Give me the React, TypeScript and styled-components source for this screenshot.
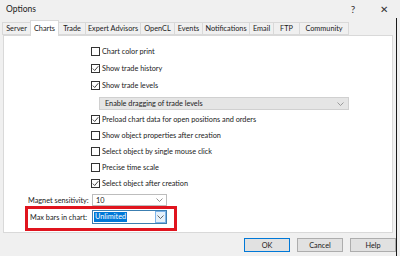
import React from "react";
import styled, { createGlobalStyle } from "styled-components";

const Global = createGlobalStyle`
  html, body { margin: 0; padding: 0; background: #f0f0f0; }
  body { width: 400px; height: 256px; overflow: hidden; font-family: Lato, "Noto Sans", sans-serif; font-size: 7.3px; color: #1a1a1a; }
`;

const Window = styled.div`
  width: 400px;
  height: 256px;
  display: flex;
  flex-direction: column;
  background: #f0f0f0;
`;

const TitleBar = styled.div`
  height: 18px;
  display: flex;
  align-items: center;
  padding-left: 6px;
  background: #f0f0f0;
  font-size: 8.5px;
  color: #222;
`;

const TitleText = styled.div`
  flex: 1;
`;

const TitleButton = styled.div<{ $w: number }>`
  width: ${(p) => p.$w}px;
  text-align: center;
  font-size: 10px;
  color: #333;
`;

const Body = styled.div`
  flex: 1;
  display: flex;
  flex-direction: column;
  border-right: 1px solid #1a1a1a;
  margin-right: 3px;
`;

const Tabs = styled.div`
  display: flex;
  align-items: flex-end;
  padding-left: 3px;
  height: 17px;
`;

const Tab = styled.div<{ $w: number; $active?: boolean }>`
  width: ${(p) => p.$w}px;
  height: ${(p) => (p.$active ? 16 : 13)}px;
  box-sizing: border-box;
  border: 1px solid #d9d9d9;
  border-bottom: ${(p) => (p.$active ? "none" : "1px solid #d9d9d9")};
  margin-left: -1px;
  background: ${(p) => (p.$active ? "#fff" : "#f0f0f0")};
  display: flex;
  align-items: center;
  justify-content: center;
  position: relative;
  z-index: ${(p) => (p.$active ? 1 : 0)};
  margin-bottom: ${(p) => (p.$active ? "-1px" : "0")};
  white-space: nowrap;
`;

const Panel = styled.div`
  margin-left: 3px;
  width: 390px;
  height: 198px;
  box-sizing: border-box;
  background: #fff;
  border: 1px solid #d9d9d9;
  display: flex;
  flex-direction: column;
`;

const Row = styled.div<{ $top: number }>`
  display: flex;
  align-items: center;
  height: 14px;
  margin-top: ${(p) => p.$top}px;
  padding-left: 87px;
  white-space: nowrap;
`;

const Box = styled.div`
  width: 9px;
  height: 9px;
  box-sizing: border-box;
  border: 1px solid #333;
  margin-right: 2px;
  display: flex;
  align-items: center;
  justify-content: center;
  background: #fff;
`;

const Check = () => (
  <svg width="7" height="7" viewBox="0 0 7 7">
    <path d="M0.8 3.6 L2.7 5.5 L6.3 1.2" fill="none" stroke="#333" strokeWidth="0.9" />
  </svg>
);

const Chevron = ({ color = "#777" }: { color?: string }) => (
  <svg width="7" height="4" viewBox="0 0 7 4">
    <path d="M0.5 0.5 L3.5 3.5 L6.5 0.5" fill="none" stroke={color} strokeWidth="0.8" />
  </svg>
);

const WideSelect = styled.div`
  margin-left: 95px;
  margin-top: 5px;
  width: 250px;
  height: 13px;
  box-sizing: border-box;
  background: #e5e5e5;
  border: 1px solid #d0d0d0;
  display: flex;
  align-items: center;
  justify-content: space-between;
  padding: 0 4px 0 5px;
`;

const FieldRow = styled.div<{ $top: number; $label: number }>`
  display: grid;
  grid-template-columns: ${(p) => p.$label}px 75px;
  align-items: center;
  margin-top: ${(p) => p.$top}px;
  white-space: nowrap;
`;

const MagnetWrap = styled.div`
  padding-left: 24px;
`;

const RedFrame = styled.div`
  margin-left: 21px;
  width: 152px;
  height: 25px;
  box-sizing: border-box;
  border: 3px solid #e0141e;
  padding: 1px 0 0 2px;
`;

const Select = styled.div<{ $focus?: boolean }>`
  height: ${(p) => (p.$focus ? 14 : 12)}px;
  box-sizing: border-box;
  border: 1px solid ${(p) => (p.$focus ? "#3c7fb1" : "#bdbdbd")};
  background: #fff;
  display: flex;
  align-items: center;
  justify-content: space-between;
  padding-left: ${(p) => (p.$focus ? 1 : 3)}px;
  padding-right: ${(p) => (p.$focus ? 0 : 3)}px;
`;

const Selected = styled.span`
  background: #0078d7;
  color: #fff;
  padding: 0 1px;
  line-height: 10px;
`;

const DropButton = styled.div`
  width: 11px;
  height: 12px;
  box-sizing: border-box;
  border: 1px solid #7eb4ea;
  background: #e5f1fb;
  display: flex;
  align-items: center;
  justify-content: center;
`;

const Footer = styled.div`
  display: flex;
  justify-content: flex-end;
  gap: 7px;
  padding-top: 5px;
`;

const Button = styled.div<{ $primary?: boolean }>`
  width: 46px;
  height: 14px;
  box-sizing: border-box;
  border: 1px solid ${(p) => (p.$primary ? "#0078d7" : "#adadad")};
  background: #e1e1e1;
  display: flex;
  align-items: center;
  justify-content: center;
`;

const tabs: [string, number][] = [
  ["Server", 29],
  ["Charts", 29],
  ["Trade", 28],
  ["Expert Advisors", 56],
  ["OpenCL", 35],
  ["Events", 29],
  ["Notifications", 48],
  ["Email", 25],
  ["FTP", 27],
  ["Community", 50],
];

const checks: [string, boolean, number][] = [
  ["Chart color print", false, 8],
  ["Show trade history", true, 3],
  ["Show trade levels", true, 3],
];

const checks2: [string, boolean, number][] = [
  ["Preload chart data for open positions and orders", true, 2],
  ["Show object properties after creation", false, 2],
  ["Select object by single mouse click", false, 2],
  ["Precise time scale", false, 2],
  ["Select object after creation", true, 2],
];

const CheckRow = ({ label, on, top }: { label: string; on: boolean; top: number }) => (
  <Row $top={top}>
    <Box>{on && <Check />}</Box>
    {label}
  </Row>
);

export default function App() {
  return (
    <>
      <Global />
      <Window>
        <TitleBar>
          <TitleText>Options</TitleText>
          <TitleButton $w={30}>?</TitleButton>
          <TitleButton $w={32}>✕</TitleButton>
        </TitleBar>
        <Body>
          <Tabs>
            {tabs.map(([t, w]) => (
              <Tab key={t} $w={w} $active={t === "Charts"}>
                {t}
              </Tab>
            ))}
          </Tabs>
          <Panel>
            {checks.map(([l, on, top]) => (
              <CheckRow key={l} label={l} on={on} top={top} />
            ))}
            <WideSelect>
              Enable dragging of trade levels
              <Chevron color="#888" />
            </WideSelect>
            {checks2.map(([l, on, top]) => (
              <CheckRow key={l} label={l} on={on} top={top} />
            ))}
            <MagnetWrap>
              <FieldRow $top={4} $label={64}>
                <span>Magnet sensitivity:</span>
                <Select>
                  10
                  <Chevron />
                </Select>
              </FieldRow>
            </MagnetWrap>
            <RedFrame>
              <FieldRow $top={0} $label={62}>
                <span>Max bars in chart:</span>
                <Select $focus>
                  <Selected>Unlimited</Selected>
                  <DropButton>
                    <Chevron color="#444" />
                  </DropButton>
                </Select>
              </FieldRow>
            </RedFrame>
          </Panel>
          <Footer>
            <Button $primary>OK</Button>
            <Button>Cancel</Button>
            <Button>Help</Button>
          </Footer>
        </Body>
      </Window>
    </>
  );
}
